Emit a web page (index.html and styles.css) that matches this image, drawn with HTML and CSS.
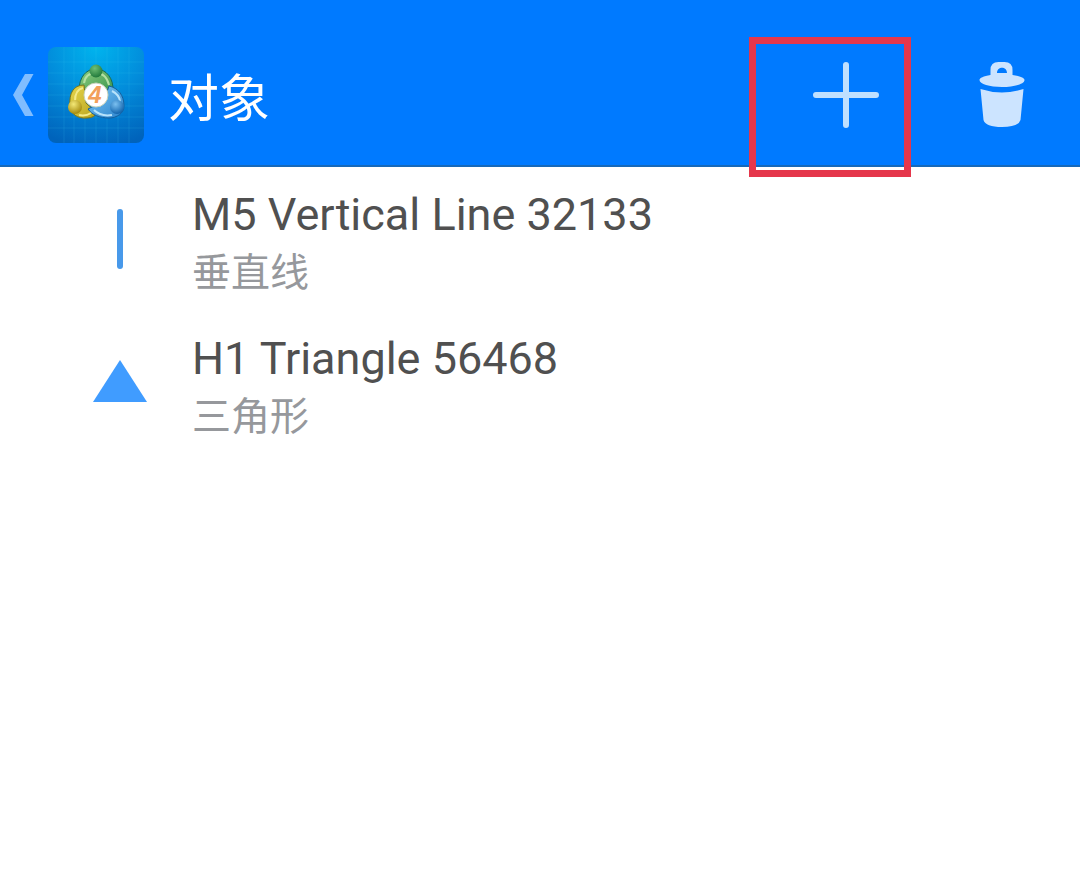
FILE: index.html
```html
<!DOCTYPE html>
<html lang="zh-CN">
<head>
    <meta charset="UTF-8">
    <meta name="viewport" content="width=device-width, initial-scale=1.0">
    <title>对象</title>
    <link rel="stylesheet" href="styles.css">
</head>
<body>
    <header class="topbar">
        <a class="back" href="#" aria-label="返回">
            <svg class="chevron" viewBox="0 0 48 96">
                <path d="M25 27h8.500L22 48l11.500 21H25L13 48z" fill="#80bdff"/>
            </svg>
            <svg class="logo" viewBox="0 0 96 96">
                <defs>
                    <radialGradient id="bg" cx=".5" cy="0" r="1.050">
                        <stop offset="0" stop-color="#00b4ee"/>
                        <stop offset=".5" stop-color="#028cdb"/>
                        <stop offset="1" stop-color="#0063bb"/>
                    </radialGradient>
                    <linearGradient id="green" x1="0" y1="0" x2="1" y2="1">
                        <stop offset="0" stop-color="#8fcf80"/>
                        <stop offset="1" stop-color="#35914a"/>
                    </linearGradient>
                    <linearGradient id="yellow" x1="0" y1="0" x2="1" y2="1">
                        <stop offset="0" stop-color="#e6d64c"/>
                        <stop offset="1" stop-color="#b9a31e"/>
                    </linearGradient>
                    <linearGradient id="blue" x1="0" y1="0" x2="1" y2="1">
                        <stop offset="0" stop-color="#7cc8f4"/>
                        <stop offset="1" stop-color="#2b83cc"/>
                    </linearGradient>
                    <radialGradient id="greenBall" cx=".4" cy=".3" r=".7">
                        <stop offset="0" stop-color="#6fbf74"/>
                        <stop offset="1" stop-color="#21793b"/>
                    </radialGradient>
                    <radialGradient id="yellowBall" cx=".4" cy=".3" r=".7">
                        <stop offset="0" stop-color="#f3e877"/>
                        <stop offset="1" stop-color="#a58a0c"/>
                    </radialGradient>
                    <radialGradient id="blueBall" cx=".4" cy=".3" r=".7">
                        <stop offset="0" stop-color="#7bc0f0"/>
                        <stop offset="1" stop-color="#1164ad"/>
                    </radialGradient>
                </defs>
                <rect width="96" height="96" rx="8" fill="url(#bg)"/>
                <path d="M16 0v96M26 0v96M37 0v96M48 0v96M59 0v96M70 0v96M81 0v96M0 15h96M0 26h96M0 37h96M0 48h96M0 59h96M0 70h96M0 81h96" stroke="#45c8f5" stroke-opacity=".16" fill="none"/>
                <path d="M31 44C31 30 38 22 48 22s18 9 17 23l-7 4H35z" fill="url(#green)" stroke="#176a58"/>
                <path d="M36 38c-11 0-15 9-14 20 0 9 8 14 17 13 5 0 8-2 10-5L38 56z" fill="url(#yellow)" stroke="#77751c"/>
                <path d="M61 39c9 2 15 9 15 20 0 7-7 12-15 12-9 0-17-3-21-9l16-8z" fill="url(#blue)" stroke="#155f9c"/>
                <path d="M36 36c1-7 6-10 12-10s11 4 13 12" fill="none" stroke="#b5e0a4" stroke-width="2"/>
                <path d="M27 54c0-8 3-12 8-13M31 68c5 1 9 0 12-2" fill="none" stroke="#f3ea8a" stroke-width="2"/>
                <path d="M64 44c6 3 8 7 8 11M46 63c5 5 12 6 18 5" fill="none" stroke="#b7e3fb" stroke-width="2"/>
                <circle cx="48" cy="24" r="6.500" fill="url(#greenBall)"/>
                <circle cx="27" cy="60" r="7" fill="url(#yellowBall)"/>
                <circle cx="69" cy="60" r="7" fill="url(#blueBall)"/>
                <circle cx="48" cy="48" r="12" fill="#fff" stroke="#c8d3bb"/>
                <text class="logo-num" x="47" y="56" text-anchor="middle">4</text>
            </svg>
        </a>
        <h1 class="title">对象</h1>
        <div class="actions">
            <button class="action highlighted" type="button" aria-label="添加">
                <svg viewBox="0 0 72 72">
                    <path d="M36 6v60M6 36h60" stroke="#bfe0ff" stroke-width="6" stroke-linecap="round"/>
                </svg>
            </button>
            <button class="action" type="button" aria-label="删除">
                <svg viewBox="0 0 72 72" fill="#cce4ff">
                    <path fill-rule="evenodd" d="M24.500 16v-5q0-8 8-8h6q8 0 8 8v5c7 1 12 3 12 5 0 4-10 7-22.500 7s-22.500-3-22.500-7c0-2 4-4 11-5zM31 14h10c0-7-10-7-10 0z"/>
                    <path d="M14.500 30q21.500 7 43 0l-3 31q-2 7-18.500 7t-18.500-7z"/>
                </svg>
            </button>
        </div>
    </header>

    <ul class="objects">
        <li>
            <a class="object" href="#">
                <svg class="object-icon" viewBox="0 0 60 60">
                    <path d="M30 3v54" stroke="#4899ea" stroke-width="6" stroke-linecap="round"/>
                </svg>
                <span class="object-text">
                    <span class="name">M5 Vertical Line 32133</span>
                    <span class="type">垂直线</span>
                </span>
            </a>
        </li>
        <li>
            <a class="object" href="#">
                <svg class="object-icon" viewBox="0 0 60 60">
                    <path d="M30 7l27 42H3z" fill="#409cff"/>
                </svg>
                <span class="object-text">
                    <span class="name">H1 Triangle 56468</span>
                    <span class="type">三角形</span>
                </span>
            </a>
        </li>
    </ul>
</body>
</html>
```
FILE: styles.css
```css
*, *::after{
    margin: 0;
    padding: 0;
    box-sizing: border-box;
}
body{
    background: #fff;
    font-family: Roboto, "Noto Sans CJK SC", sans-serif;
}
a{
    color: inherit;
    text-decoration: none;
}
svg{
    display: block;
}
.topbar{
    display: flex;
    align-items: center;
    padding: 47px 0 22px;
    background: #007aff;
    border-bottom: 2px solid #1769b9;
}
.back{
    display: flex;
}
.chevron{
    width: 48px;
    height: 96px;
}
.logo{
    width: 96px;
    height: 96px;
}
.logo-num{
    font-family: "Liberation Sans", sans-serif;
    font-size: 24px;
    font-style: italic;
    font-weight: bold;
    fill: #f2a05a;
}
.title{
    flex: 1;
    margin-left: 24px;
    padding-top: 10px;
    color: #fff;
    font-size: 51px;
    font-weight: 400;
    line-height: 86px;
}
.actions{
    display: flex;
}
.action{
    display: flex;
    align-items: center;
    justify-content: center;
    width: 156px;
    height: 96px;
    border: 0;
    background: none;
    cursor: pointer;
}
.action svg{
    width: 72px;
    height: 72px;
}
.highlighted{
    position: relative;
}
/* 红色标注框 */
.highlighted::after{
    content: "";
    position: absolute;
    top: -10px;
    left: -19px;
    width: 162px;
    height: 140px;
    border: 7px solid #e5374b;
}
.objects{
    list-style: none;
}
.object{
    display: flex;
    align-items: center;
    height: 144px;
}
.object-icon{
    flex: none;
    width: 60px;
    height: 60px;
    margin: 0 42px 0 90px;
}
.object-text{
    display: flex;
    flex-direction: column;
    padding-top: 8px;
}
.name{
    color: #505050;
    font-size: 45px;
    line-height: 60px;
}
.type{
    color: #96989c;
    font-size: 39px;
    line-height: 56px;
}
```
